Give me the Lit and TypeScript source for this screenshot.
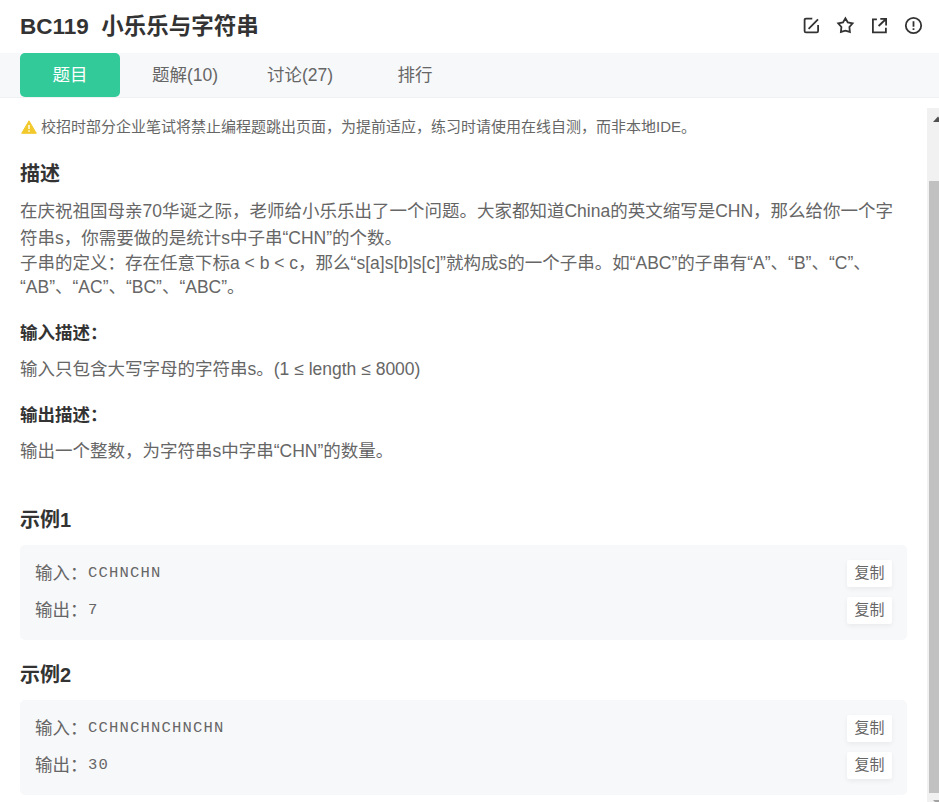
import { LitElement, html, css, svg } from "lit";
import { customElement, property } from "lit/decorators.js";

@customElement("sample-case")
class SampleCase extends LitElement {
  @property() input = "";
  @property() output = "";

  static styles = css`
    :host {
      display: block;
    }
    .box {
      box-sizing: border-box;
      height: 95px;
      padding: 15px 15px 0;
      border-radius: 5px;
      background: #f7f8fa;
      display: flex;
      flex-direction: column;
      gap: 10px;
    }
    .row {
      display: flex;
      align-items: center;
      height: 27px;
      color: #666;
    }
    .label {
      width: 52.5px;
      white-space: nowrap;
    }
    .value {
      flex: 1;
      font: 15.5px/27px "Liberation Mono", "Courier New", monospace;
      letter-spacing: 1.2px;
      padding-left: 0.5px;
    }
    .copy {
      box-sizing: border-box;
      width: 45px;
      height: 27.5px;
      line-height: 26px;
      border-radius: 2px;
      background: #fff;
      box-shadow: 0 2px 5px rgba(0, 0, 0, 0.06);
      font-size: 15px;
      text-align: center;
      white-space: nowrap;
    }
  `;

  row(label: string, value: string) {
    return html`<div class="row">
      <span class="label">${label}</span>
      <span class="value">${value}</span>
      <span class="copy">复制</span>
    </div>`;
  }

  render() {
    return html`<div class="box">
      ${this.row("输入：", this.input)} ${this.row("输出：", this.output)}
    </div>`;
  }
}

const icons = [
  svg`<path d="M10.3 1.6H4Q2.6 1.6 2.6 3V14Q2.6 15.4 4 15.4H14.7Q16.1 15.4 16.1 14V8M6.6 11.8L16 2.4"/>`,
  svg`<path d="M9.4 1.2L11.8 5.4L16.6 6.4L13.4 10L13.9 14.9L9.4 13.6L4.9 14.9L5.4 10L2.2 6.4L7 5.4Z"/>`,
  svg`<path d="M6.9 2.4H2.9V15.3H15.9V10.7M10.3 1.9H16.1V8.4M16 2L8.6 9"/>`,
  svg`<circle cx="9.5" cy="8.5" r="7.7"/><path d="M9.5 4.2V9.7M9.5 11.2V13"/>`,
];

@customElement("app-root")
class AppRoot extends LitElement {
  static styles = css`
    :host {
      display: block;
      height: 802px;
      overflow: hidden;
      background: #fff;
      color: #666;
      font: 17.5px/25px "Liberation Sans", "Noto Sans CJK SC", sans-serif;
    }
    .header {
      display: flex;
      align-items: center;
      justify-content: space-between;
      height: 53px;
      padding: 0 17px 1px 20px;
      box-sizing: border-box;
    }
    .title {
      display: flex;
      gap: 12.5px;
      color: #333;
      font-size: 22.5px;
      font-weight: 700;
      white-space: nowrap;
    }
    .icons {
      display: flex;
      gap: 16px;
    }
    .icons svg {
      width: 18px;
      height: 18px;
      fill: none;
      stroke: #333;
      stroke-width: 1.8;
      overflow: visible;
    }
    .tabs {
      display: flex;
      box-sizing: border-box;
      height: 45px;
      padding-left: 20px;
      background: #f7f8fa;
      border-bottom: 1px solid #f0f1f2;
    }
    .tab {
      width: 100px;
      height: 44px;
      line-height: 45px;
      margin-right: 15px;
      text-align: center;
      white-space: nowrap;
    }
    .tab.active {
      background: #32ca99;
      color: #fff;
      border-radius: 5px;
    }
    .main {
      display: flex;
      height: 694px;
      margin-top: 10px;
    }
    .content {
      width: 887px;
      padding: 0 20px;
      white-space: nowrap;
    }
    .notice {
      display: flex;
      align-items: center;
      gap: 4px;
      height: 38px;
      padding-left: 1px;
      font-size: 15px;
    }
    .notice span {
      margin-top: -2px;
    }
    .notice svg {
      width: 16px;
      height: 14px;
    }
    .heading {
      margin-top: 13px;
      height: 30px;
      line-height: 30px;
      font-size: 20px;
      font-weight: 700;
      color: #333;
    }
    .text {
      margin-top: 10px;
    }
    .line {
      height: 25px;
    }
    .line.tall {
      height: 27px;
    }
    .line.short {
      height: 24px;
    }
    .sub {
      margin-top: 21px;
      color: #333;
      font-weight: 700;
    }
    .sub + .line {
      margin-top: 11px;
    }
    .heading.first {
      margin-top: 41px;
    }
    .heading.next {
      margin-top: 20px;
    }
    sample-case {
      margin-top: 10px;
    }
    .scroll {
      box-sizing: border-box;
      width: 12px;
      padding-left: 2px;
      background: #f1f1f1;
      overflow: hidden;
    }
    .scroll svg {
      display: block;
      width: 10px;
      height: 73px;
    }
    .thumb {
      height: 612px;
      background: #c1c1c1;
    }
    .scroll .down {
      height: 9px;
    }
  `;

  render() {
    return html`
      <div class="header">
        <div class="title"><span>BC119</span><span>小乐乐与字符串</span></div>
        <div class="icons">
          ${icons.map((i) => html`<svg viewBox="0 0 18 18">${i}</svg>`)}
        </div>
      </div>
      <div class="tabs">
        <div class="tab active">题目</div>
        <div class="tab">题解(10)</div>
        <div class="tab">讨论(27)</div>
        <div class="tab">排行</div>
      </div>
      <div class="main">
        <div class="content">
          <div class="notice">
            <svg viewBox="0 0 16 14">
              <path d="M8 .8L15.3 13.3H.7Z" fill="#f2c92c" stroke="#f2c92c" stroke-linejoin="round" />
              <path d="M8 5V9M8 10.3V11.8" stroke="#fff" stroke-width="1.4" />
            </svg>
            <span>校招时部分企业笔试将禁止编程题跳出页面，为提前适应，练习时请使用在线自测，而非本地IDE。</span>
          </div>
          <div class="heading">描述</div>
          <div class="text">
            <div class="line tall">在庆祝祖国母亲70华诞之际，老师给小乐乐出了一个问题。大家都知道China的英文缩写是CHN，那么给你一个字</div>
            <div class="line">符串s，你需要做的是统计s中子串“CHN”的个数。</div>
            <div class="line short">子串的定义：存在任意下标a &lt; b &lt; c，那么“s[a]s[b]s[c]”就构成s的一个子串。如“ABC”的子串有“A”、“B”、“C”、</div>
            <div class="line">“AB”、“AC”、“BC”、“ABC”。</div>
          </div>
          <div class="sub">输入描述：</div>
          <div class="line">输入只包含大写字母的字符串s。(1 ≤ length ≤ 8000)</div>
          <div class="sub">输出描述：</div>
          <div class="line">输出一个整数，为字符串s中字串“CHN”的数量。</div>
          <div class="heading first">示例1</div>
          <sample-case input="CCHNCHN" output="7"></sample-case>
          <div class="heading next">示例2</div>
          <sample-case input="CCHNCHNCHNCHN" output="30"></sample-case>
        </div>
        <div class="scroll">
          <svg viewBox="0 0 10 73"><path d="M4 14L9 8.5L14 14Z" fill="#505050" /></svg>
          <div class="thumb"></div>
          <svg class="down" viewBox="0 0 10 9"><path d="M4 7H14L9 12Z" fill="#a3a3a3" /></svg>
        </div>
      </div>
    `;
  }
}
